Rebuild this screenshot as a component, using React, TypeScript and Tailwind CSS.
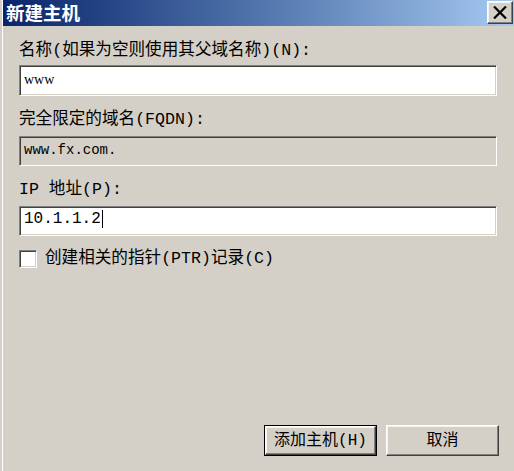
const sunken =
    'border border-t-[#808080] border-l-[#808080] border-b-white border-r-white shadow-[inset_1px_1px_0_#404040,inset_-1px_-1px_0_#d4d0c8]';
const raised =
    'border border-t-white border-l-white border-b-[#404040] border-r-[#404040] shadow-[inset_-1px_-1px_0_#808080,inset_1px_1px_0_#f4f3ef]';

const uiFont = "font-['Liberation_Mono','Noto_Sans_CJK_SC',monospace]";

function Label({ children }: { children: React.ReactNode }) {
    return <div className={`h-[20px] leading-[20px] text-[16.6px] text-black ${uiFont}`}>{children}</div>;
}

export default function App() {
    return (
        <div className="w-[514px] h-[471px] bg-[#d4d0c8] pl-[2px] overflow-hidden">
            <div className="h-full border-l border-white flex flex-col">
                {/* title bar */}
                <div className="h-[26px] shrink-0 flex items-start justify-between pl-[3px] pr-[1px] bg-gradient-to-r from-[#0a246a] to-[#a6caf0]">
                    <span className="mt-[1px] text-[18.5px] leading-[22px] font-bold text-white font-['Noto_Sans_CJK_SC',sans-serif]">
                        新建主机
                    </span>
                    <button className={`mt-[1px] w-[26px] h-[23px] bg-[#d4d0c8] flex items-center justify-center ${raised}`}>
                        <svg width="14" height="13" viewBox="0 0 14 13">
                            <path d="M1 0.5L13 12.5M13 0.5L1 12.5" stroke="#000" strokeWidth={2.2} />
                        </svg>
                    </button>
                </div>

                {/* form */}
                <div className="flex-1 flex flex-col pl-[16px]">
                    <div className="mt-[15px]">
                        <Label>名称(如果为空则使用其父域名称)(N):</Label>
                    </div>
                    <div className={`mt-[4px] w-[478px] h-[31px] bg-white flex items-center pl-[4px] pb-[3px] ${sunken}`}>
                        <span className="text-[14px] text-black font-['Liberation_Serif',serif]">www</span>
                    </div>

                    <div className="mt-[14px]">
                        <Label>完全限定的域名(FQDN):</Label>
                    </div>
                    <div className={`mt-[6px] w-[478px] h-[30px] bg-[#d4d0c8] flex items-center pl-[4px] pb-[2px] ${sunken}`}>
                        <span className="text-[14px] text-black font-['Liberation_Mono',monospace]">www.fx.com.</span>
                    </div>

                    <div className="mt-[14px]">
                        <Label>IP 地址(P):</Label>
                    </div>
                    <div className={`mt-[6px] w-[478px] h-[30px] bg-white flex items-center pl-[4px] pb-[4px] ${sunken}`}>
                        <span className="text-[16px] leading-[18px] text-black font-['Liberation_Mono',monospace]">10.1.1.2</span>
                        <span className="ml-[1px] w-[1px] h-[18px] bg-black" />
                    </div>

                    <div className="mt-[13px] flex items-center gap-[8px]">
                        <div className={`w-[18px] h-[18px] bg-white ${sunken}`} />
                        <Label>创建相关的指针(PTR)记录(C)</Label>
                    </div>

                    <div className="flex-1" />

                    <div className="flex justify-end gap-[9px] pr-[15px] pb-[15px]">
                        <div className="border border-black">
                            <button
                                className={`w-[111px] h-[29px] bg-[#d4d0c8] text-[16px] text-black ${uiFont} ${raised}`}
                            >
                                添加主机(H)
                            </button>
                        </div>
                        <button className={`w-[113px] h-[31px] bg-[#d4d0c8] text-[16px] text-black ${uiFont} ${raised}`}>
                            取消
                        </button>
                    </div>
                </div>
            </div>
        </div>
    );
}
